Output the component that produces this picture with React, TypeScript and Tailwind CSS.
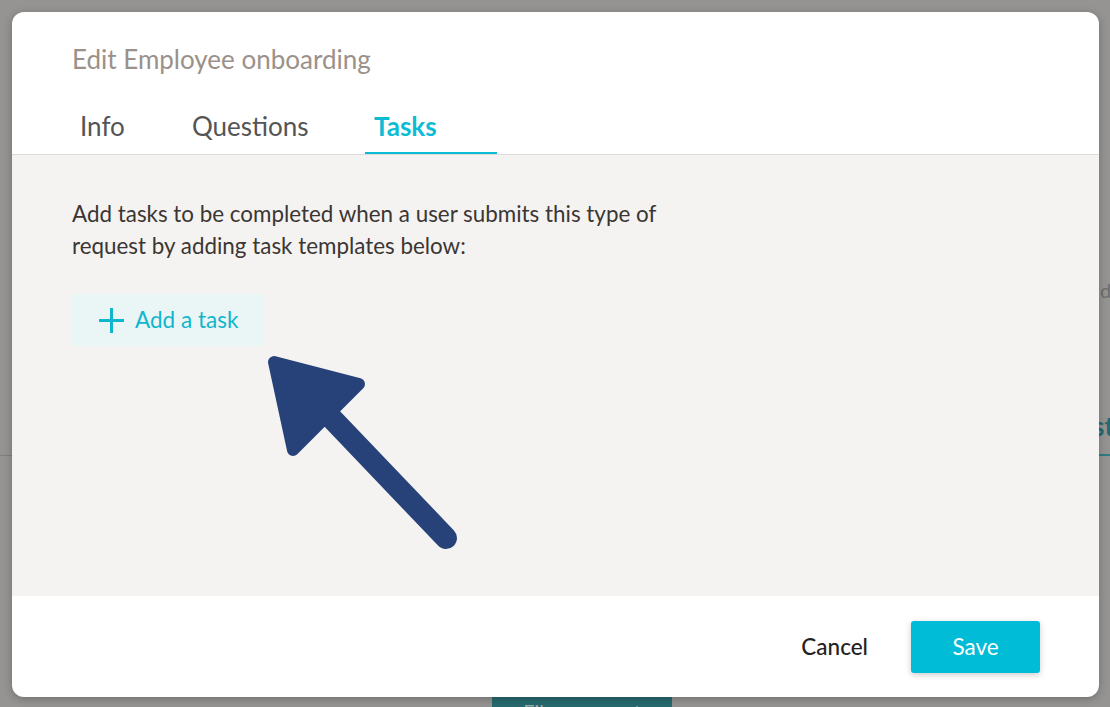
import React from 'react';

export default function App() {
  return (
    <div
      className="relative w-[1110px] h-[707px] overflow-hidden bg-[#959492]"
      style={{ fontFamily: 'Lato, "Open Sans", sans-serif' }}
    >
      {/* Dimmed page behind the dialog */}
      <div className="absolute left-0 top-[455px] w-[12px] h-px bg-[#7f7f7e]" />
      <div className="absolute left-[1100px] top-[280px] text-[20px] leading-[20px] text-[#6f6e6d]">d</div>
      <div className="absolute left-[1093px] top-[413px] text-[26px] leading-[26px] font-bold text-[#236a72]">st</div>
      <div className="absolute left-[1096px] top-[454px] w-[14px] h-[2px] bg-[#2f7c84]" />
      <div className="absolute left-[492px] top-[697px] w-[180px] h-[40px] bg-[#276a6e] text-center text-[20px] leading-[28px] text-[#9aa9a9]">
        File a request
      </div>

      {/* Dialog */}
      <div className="absolute left-[12px] top-[12px] w-[1087px] h-[685px] bg-white rounded-[12px] overflow-hidden flex flex-col shadow-[0_2px_8px_rgba(0,0,0,0.25)]">
        {/* Header */}
        <div className="border-b border-[#dddbd9]">
          <h1 className="pl-[60px] pt-[31px] text-[26px] leading-[32px] text-[#9b918a]">
            Edit Employee onboarding
          </h1>
          <div className="flex mt-[35px] pl-[59px]">
            <button className="w-[112px] pl-[9px] pb-[10px] text-left text-[26px] leading-[32px] text-[#545454] border-b-2 border-transparent">
              Info
            </button>
            <button className="w-[182px] pl-[9px] pb-[10px] text-left text-[26px] leading-[32px] text-[#545454] border-b-2 border-transparent">
              Questions
            </button>
            <button className="w-[132px] pl-[9px] pb-[10px] text-left text-[26px] leading-[32px] font-bold text-[#0cbcd5] border-b-2 border-[#0cbcd5]">
              Tasks
            </button>
          </div>
        </div>

        {/* Body */}
        <div className="flex-1 bg-[#f4f3f1] pl-[60px] pt-[43px]">
          <p className="max-w-[610px] text-[22.4px] leading-[32px] text-[#3b3633]">
            Add tasks to be completed when a user submits this type of request by adding task templates below:
          </p>
          <button className="mt-[32px] w-[191px] h-[52px] bg-[#eaf5f6] flex items-center pl-[26px] gap-[10px] text-[22.5px] text-[#10b6cd]">
            <svg width="27" height="27" viewBox="0 0 27 27">
              <path d="M13.5 1v25M1 13.5h25" stroke="#10b6cd" strokeWidth="3" />
            </svg>
            Add a task
          </button>
        </div>

        {/* Footer */}
        <div className="h-[101px] flex items-start justify-end pt-[25px] pr-[59px] gap-[43px]">
          <button className="h-[52px] text-[22.5px] font-medium text-[#222]">Cancel</button>
          <button className="w-[129px] h-[52px] rounded-[3px] bg-[#00bcd6] text-white text-[22.5px] shadow-[0_2px_6px_rgba(0,0,0,0.2)]">
            Save
          </button>
        </div>
      </div>

      {/* Annotation arrow */}
      <svg className="absolute left-0 top-0 pointer-events-none" width="1110" height="707">
        <polygon
          points="274,362 359,384 293,450"
          fill="#264279"
          stroke="#264279"
          strokeWidth="12"
          strokeLinejoin="round"
        />
        <line x1="318" y1="404" x2="446" y2="538" stroke="#264279" strokeWidth="22" strokeLinecap="round" />
      </svg>
    </div>
  );
}
